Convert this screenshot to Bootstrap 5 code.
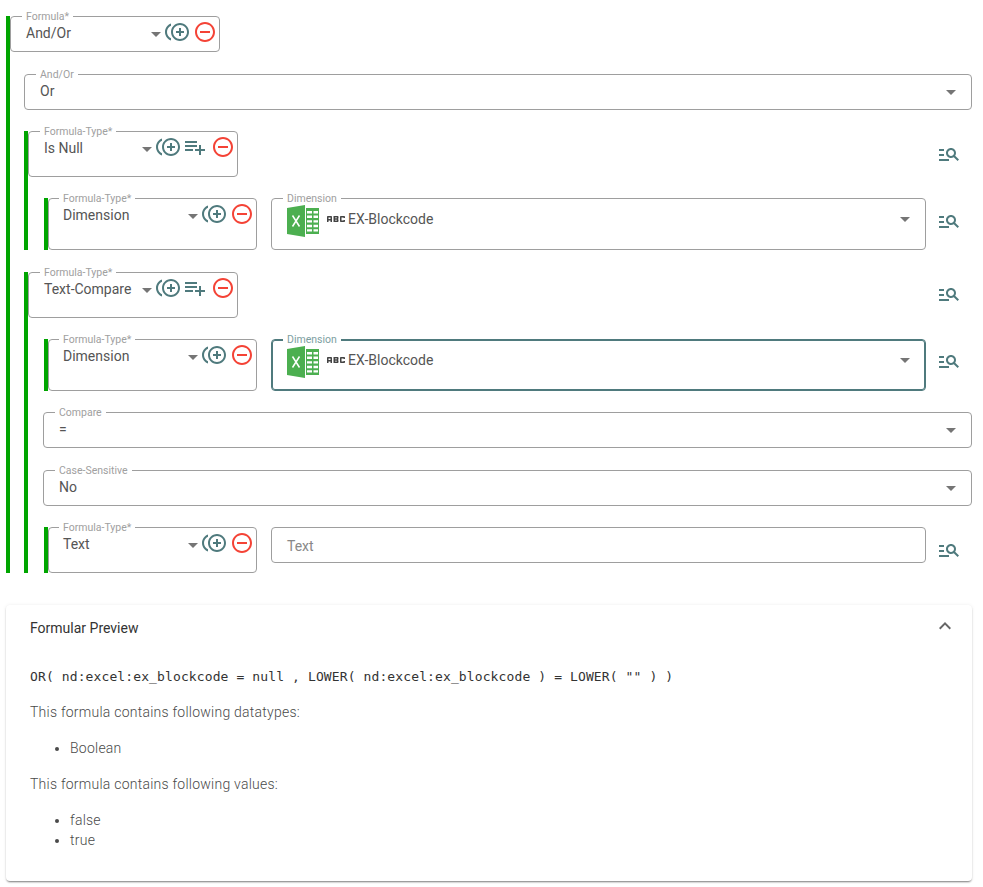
<!DOCTYPE html>
<html lang="en">
<head>
<meta charset="utf-8">
<title>Formula</title>
<link href="https://cdn.jsdelivr.net/npm/bootstrap@5.3.0/dist/css/bootstrap.min.css" rel="stylesheet">
<style>
body{font-family:Roboto,"Liberation Sans",sans-serif;font-size:14px;line-height:20px;color:#555;background:#fff;margin:0}
.page{padding:16px 11px 6px 6px}
.tree-bar{border-left:4px solid #00a500}
.fld{position:relative;display:flex;align-items:flex-start;border:1px solid #9e9e9e;border-radius:4px;padding:6px 2px 0 15px;height:36px;color:#555}
.fld-label{position:absolute;top:-7px;left:11px;padding:0 4px;background:#fff;font-size:10.5px;line-height:13px;color:#a0a0a0;white-space:nowrap}
.fld-value{flex:1 1 auto;min-width:0;white-space:nowrap}
.fld-arrow{flex:none;width:0;height:0;border-left:5px solid transparent;border-right:5px solid transparent;border-top:5px solid #757575;margin:9px 4px 0 0}
.fld-wide{padding-right:15px}
.fld-wide .fld-arrow{margin-right:0}
.fld-h46{height:46px}
.fld-h52{height:52px}
.w-formula{width:210px}
.w-child{width:209px;flex:none;padding-left:14px}
.w-child .fld-label{left:10px}
.ico{flex:none;display:block;width:24px;height:24px;fill:#4f7a7d}
.ico-btns{display:flex;gap:4px;margin-top:-3px}
.ico-list{margin-left:-1px}
.ico-rem{fill:#f44336}
.finder{margin:11px 11px 0;flex:none}
.finder-up{margin-top:10px}
.line-flex{display:flex;align-items:flex-start}
.grow{flex:1 1 auto;min-width:0}
.child-row{display:flex;align-items:flex-start;margin-left:16px}
.child-main{display:flex;gap:14px;flex:1 1 auto;min-width:0}
.mt-a{margin-top:22px}
.mt-b{margin-top:21px}
.ml-group{margin-left:14px}
.ml-cmp{margin-left:15px}
.fld-dim{flex:1 1 auto;padding:6px 15px 0}
.fld-dim .fld-arrow{margin:12px 0 0}
.dim-value{display:flex;align-items:flex-start;flex:1 1 auto}
.xl{display:block;width:32px;height:32px;flex:none;margin-right:5px}
.abc{display:block;width:24px;height:24px;fill:#444;flex:none;margin-top:2px}
.dim-text{margin-top:4px}
.fld-focus{border-color:#4f7a7d;box-shadow:inset 0 0 0 1px #4f7a7d}
.fld-focus .fld-label{color:#7c9ea1}
.fld-input{flex:1 1 auto;height:36px;align-items:center;padding:2px 15px 0;color:#888}
.preview{margin-top:32px;border:0;border-radius:4px;box-shadow:0 2px 2px -1px rgba(0,0,0,.42),0 1px 2px rgba(0,0,0,.12),0 0 4px rgba(0,0,0,.06)}
.preview-head{display:flex;justify-content:space-between;align-items:center;padding:13px 19px 13px 24px;color:#333;height:46px}
.preview-head svg{display:block;width:24px;height:24px;fill:#666;margin-right:-4px;margin-top:-4px}
.preview-body{padding:16px 24px 15px;font-weight:300;color:#4a4a4a;letter-spacing:.24px}
.preview-body p,.preview-body ul{margin:0 0 16px}
.preview-body ul{padding-left:40px}
.formula-code{font-family:"DejaVu Sans Mono","Liberation Mono",monospace;font-size:13px;font-weight:400;color:#333;line-height:20px;white-space:pre;letter-spacing:.115px;margin-bottom:15px}
</style>
</head>
<body>
<svg width="0" height="0" class="position-absolute">
<defs>
<symbol id="i-dup" viewBox="0 0 24 24"><path d="M16 8h-2v3h-3v2h3v3h2v-3h3v-2h-3zM2 12c0-2.79 1.64-5.2 4.01-6.32V3.52C2.52 4.76 0 8.09 0 12s2.52 7.24 6.01 8.48v-2.16C3.64 17.2 2 14.79 2 12zm13-9c-4.96 0-9 4.04-9 9s4.04 9 9 9 9-4.04 9-9-4.04-9-9-9zm0 16c-3.86 0-7-3.14-7-7s3.14-7 7-7 7 3.14 7 7-3.14 7-7 7z"/></symbol>
<symbol id="i-rem" viewBox="0 0 24 24"><path d="M7 11v2h10v-2H7zm5-9C6.48 2 2 6.48 2 12s4.48 10 10 10 10-4.48 10-10S17.52 2 12 2zm0 18c-4.41 0-8-3.59-8-8s3.59-8 8-8 8 3.59 8 8-3.59 8-8 8z"/></symbol>
<symbol id="i-list" viewBox="0 0 24 24"><path d="M14 10H2v2h12v-2zm0-4H2v2h12V6zm4 8v-4h-2v4h-4v2h4v4h2v-4h4v-2h-4zM2 16h8v-2H2v2z"/></symbol>
<symbol id="i-find" viewBox="0 0 24 24"><path d="M7 9H2V7h5v2zm0 3H2v2h5v-2zm13.59 7l-3.83-3.83C15.96 15.69 15.02 16 14 16c-2.76 0-5-2.24-5-5s2.24-5 5-5 5 2.24 5 5c0 1.02-.31 1.96-.83 2.75L22 17.59 20.59 19zM17 11c0-1.65-1.35-3-3-3s-3 1.35-3 3 1.35 3 3 3 3-1.35 3-3zM2 19h10v-2H2v2z"/></symbol>
<symbol id="i-abc" viewBox="0 0 24 24"><path d="M21 11h-1.5v-.5h-2v3h2V13H21v1c0 .55-.45 1-1 1h-3c-.55 0-1-.45-1-1v-4c0-.55.45-1 1-1h3c.55 0 1 .45 1 1v1zM8 10v5H6.5v-1.5h-2V15H3v-5c0-.55.45-1 1-1h3c.55 0 1 .45 1 1zm-1.5.5h-2V12h2v-1.5zm7 1.5c.55 0 1 .45 1 1v1c0 .55-.45 1-1 1h-4V9h4c.55 0 1 .45 1 1v1c0 .55-.45 1-1 1zM11 10.5v.75h2v-.75h-2zm2 2.25h-2v.75h2v-.75z"/></symbol>
<symbol id="i-xl" viewBox="0 0 32 32"><path fill="#4caf50" d="M0 3 18 0v32L0 29z"/><path fill="#4caf50" d="M19 3h13v26H19z"/><path fill="#fff" d="M20 6h5v2.4h-5zM26.500 6H31v2.4h-4.500zM20 10.600h5V13h-5zM26.500 10.600H31V13h-4.500zM20 15.200h5v2.400h-5zM26.500 15.200H31v2.400h-4.500zM20 19.800h5v2.400h-5zM26.500 19.800H31v2.400h-4.500zM20 24.200h5v2.400h-5zM26.500 24.200H31v2.400h-4.500z"/><path fill="none" stroke="#fff" stroke-width="1.500" d="M5.500 10.500l7 11M12.500 10.500l-7 11"/></symbol>
<symbol id="i-up" viewBox="0 0 24 24"><path d="M12 8l-6 6 1.410 1.410L12 10.830l4.590 4.580L18 14z"/></symbol>
</defs>
</svg>

<div class="page">
  <div class="tree-bar">
    <div class="fld w-formula">
      <span class="fld-label">Formula*</span>
      <span class="fld-value">And/Or</span>
      <span class="fld-arrow"></span>
      <span class="ico-btns"><svg class="ico"><use href="#i-dup"/></svg><svg class="ico ico-rem"><use href="#i-rem"/></svg></span>
    </div>

    <div class="fld fld-wide ml-group mt-a">
      <span class="fld-label">And/Or</span>
      <span class="fld-value">Or</span>
      <span class="fld-arrow"></span>
    </div>

    <div class="tree-bar ml-group mt-b">
      <div class="line-flex">
        <div class="grow">
          <div class="fld fld-h46 w-formula">
            <span class="fld-label">Formula-Type*</span>
            <span class="fld-value">Is Null</span>
            <span class="fld-arrow"></span>
            <span class="ico-btns"><svg class="ico"><use href="#i-dup"/></svg><svg class="ico ico-list"><use href="#i-list"/></svg><svg class="ico ico-rem"><use href="#i-rem"/></svg></span>
          </div>
        </div>
        <svg class="ico finder"><use href="#i-find"/></svg>
      </div>
      <div class="child-row mt-b">
        <div class="tree-bar child-main">
          <div class="fld fld-h52 w-child">
            <span class="fld-label">Formula-Type*</span>
            <span class="fld-value">Dimension</span>
            <span class="fld-arrow"></span>
            <span class="ico-btns"><svg class="ico"><use href="#i-dup"/></svg><svg class="ico ico-rem"><use href="#i-rem"/></svg></span>
          </div>
          <div class="fld fld-h52 fld-dim">
            <span class="fld-label">Dimension</span>
            <span class="dim-value"><svg class="xl"><use href="#i-xl"/></svg><svg class="abc"><use href="#i-abc"/></svg><span class="dim-text">EX-Blockcode</span></span>
            <span class="fld-arrow"></span>
          </div>
        </div>
        <svg class="ico finder"><use href="#i-find"/></svg>
      </div>
    </div>

    <div class="tree-bar ml-group mt-a">
      <div class="line-flex">
        <div class="grow">
          <div class="fld fld-h46 w-formula">
            <span class="fld-label">Formula-Type*</span>
            <span class="fld-value">Text-Compare</span>
            <span class="fld-arrow"></span>
            <span class="ico-btns"><svg class="ico"><use href="#i-dup"/></svg><svg class="ico ico-list"><use href="#i-list"/></svg><svg class="ico ico-rem"><use href="#i-rem"/></svg></span>
          </div>
        </div>
        <svg class="ico finder finder-up"><use href="#i-find"/></svg>
      </div>
      <div class="child-row mt-b">
        <div class="tree-bar child-main">
          <div class="fld fld-h52 w-child">
            <span class="fld-label">Formula-Type*</span>
            <span class="fld-value">Dimension</span>
            <span class="fld-arrow"></span>
            <span class="ico-btns"><svg class="ico"><use href="#i-dup"/></svg><svg class="ico ico-rem"><use href="#i-rem"/></svg></span>
          </div>
          <div class="fld fld-h52 fld-dim fld-focus">
            <span class="fld-label">Dimension</span>
            <span class="dim-value"><svg class="xl"><use href="#i-xl"/></svg><svg class="abc"><use href="#i-abc"/></svg><span class="dim-text">EX-Blockcode</span></span>
            <span class="fld-arrow"></span>
          </div>
        </div>
        <svg class="ico finder finder-up"><use href="#i-find"/></svg>
      </div>
      <div class="fld fld-wide ml-cmp mt-b">
        <span class="fld-label">Compare</span>
        <span class="fld-value">=</span>
        <span class="fld-arrow"></span>
      </div>
      <div class="fld fld-wide ml-cmp mt-a">
        <span class="fld-label">Case-Sensitive</span>
        <span class="fld-value">No</span>
        <span class="fld-arrow"></span>
      </div>
      <div class="child-row mt-b">
        <div class="tree-bar child-main">
          <div class="fld fld-h46 w-child">
            <span class="fld-label">Formula-Type*</span>
            <span class="fld-value">Text</span>
            <span class="fld-arrow"></span>
            <span class="ico-btns"><svg class="ico"><use href="#i-dup"/></svg><svg class="ico ico-rem"><use href="#i-rem"/></svg></span>
          </div>
          <div class="fld fld-input">Text</div>
        </div>
        <svg class="ico finder"><use href="#i-find"/></svg>
      </div>
    </div>
  </div>

  <div class="card preview">
    <div class="preview-head"><span>Formular Preview</span><svg><use href="#i-up"/></svg></div>
    <div class="preview-body">
      <div class="formula-code">OR( nd:excel:ex_blockcode = null , LOWER( nd:excel:ex_blockcode ) = LOWER( "" ) )</div>
      <p>This formula contains following datatypes:</p>
      <ul><li>Boolean</li></ul>
      <p>This formula contains following values:</p>
      <ul><li>false</li><li>true</li></ul>
    </div>
  </div>
</div>
<script src="https://cdn.jsdelivr.net/npm/bootstrap@5.3.0/dist/js/bootstrap.bundle.min.js"></script>
</body>
</html>
